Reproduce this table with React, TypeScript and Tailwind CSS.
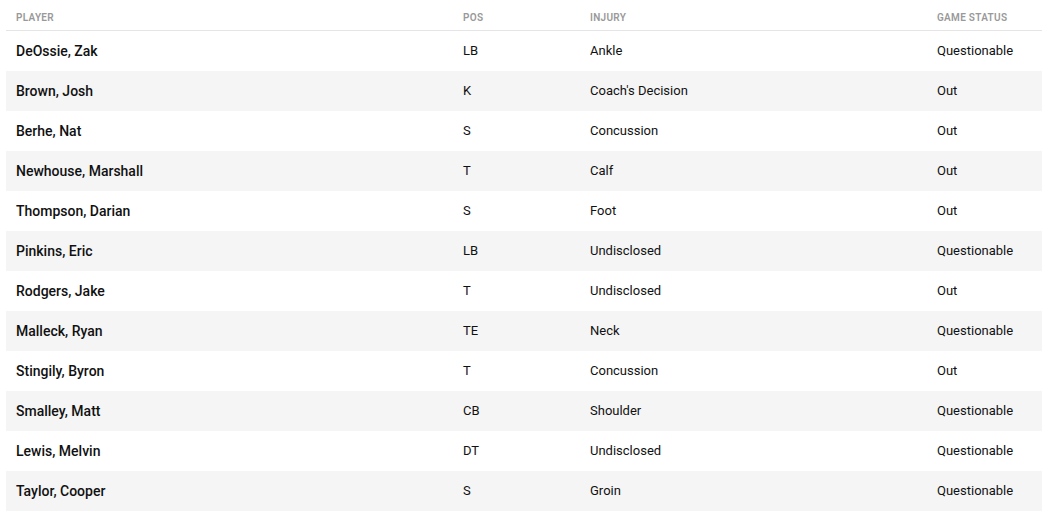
import React from 'react';

interface InjuryRow {
  name: string;
  pos: string;
  injury: string;
  status: string;
}

const rows: InjuryRow[] = [
  { name: 'DeOssie, Zak', pos: 'LB', injury: 'Ankle', status: 'Questionable' },
  { name: 'Brown, Josh', pos: 'K', injury: "Coach's Decision", status: 'Out' },
  { name: 'Berhe, Nat', pos: 'S', injury: 'Concussion', status: 'Out' },
  { name: 'Newhouse, Marshall', pos: 'T', injury: 'Calf', status: 'Out' },
  { name: 'Thompson, Darian', pos: 'S', injury: 'Foot', status: 'Out' },
  { name: 'Pinkins, Eric', pos: 'LB', injury: 'Undisclosed', status: 'Questionable' },
  { name: 'Rodgers, Jake', pos: 'T', injury: 'Undisclosed', status: 'Out' },
  { name: 'Malleck, Ryan', pos: 'TE', injury: 'Neck', status: 'Questionable' },
  { name: 'Stingily, Byron', pos: 'T', injury: 'Concussion', status: 'Out' },
  { name: 'Smalley, Matt', pos: 'CB', injury: 'Shoulder', status: 'Questionable' },
  { name: 'Lewis, Melvin', pos: 'DT', injury: 'Undisclosed', status: 'Questionable' },
  { name: 'Taylor, Cooper', pos: 'S', injury: 'Groin', status: 'Questionable' },
];

const cols = 'grid grid-cols-[447px_127px_347px_1fr] px-[10px] items-center';

const App = () => {
  return (
    <div className="bg-white w-[1042px] h-[515px] pl-[6px] font-['Roboto',sans-serif]">
      <div className={`${cols} h-[31px] pt-[4px] border-b border-[#e5e5e5] text-[10px] font-semibold uppercase text-[#999] tracking-[0.03em]`}>
        <span>Player</span>
        <span>Pos</span>
        <span>Injury</span>
        <span>Game Status</span>
      </div>
      {rows.map((r, i) => (
        <div
          key={r.name}
          className={`${cols} h-[40px] text-[13px] text-[#111] ${i % 2 === 1 ? 'bg-[#f5f5f5]' : 'bg-white'}`}
        >
          <span className="font-medium text-[14px]">{r.name}</span>
          <span>{r.pos}</span>
          <span>{r.injury}</span>
          <span>{r.status}</span>
        </div>
      ))}
    </div>
  );
};

export default App;
